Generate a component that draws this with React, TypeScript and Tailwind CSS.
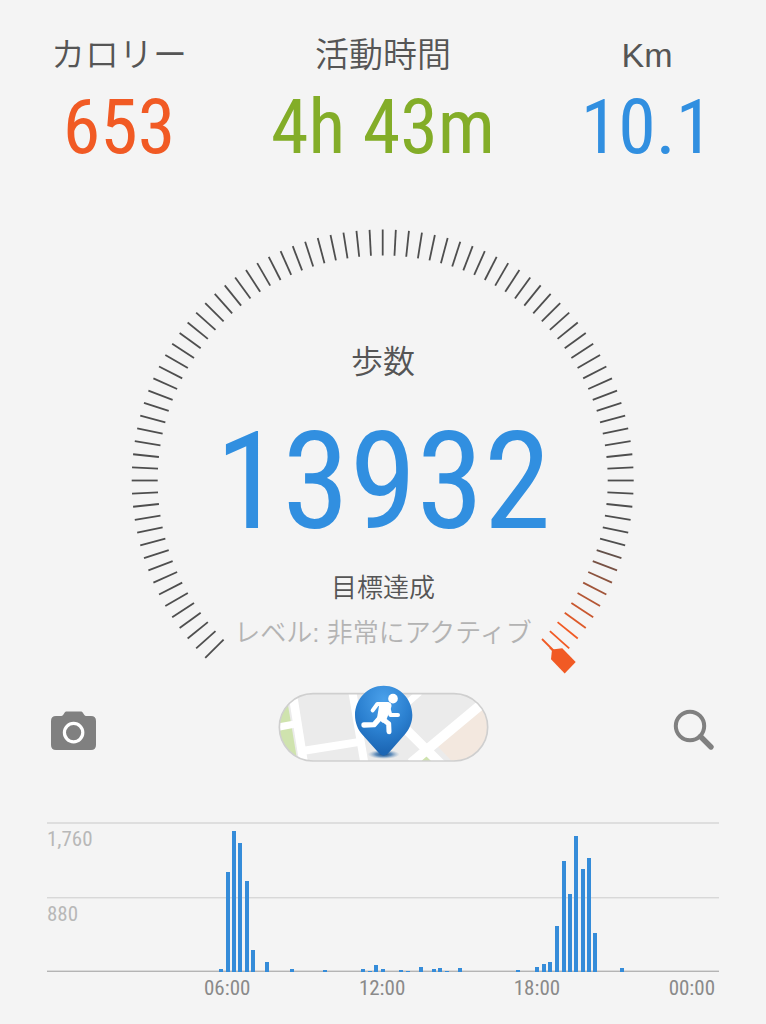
import { useId } from 'react';

const condensed =
  "font-['Roboto_Condensed','Liberation_Sans_Narrow','Arial_Narrow','Liberation_Sans',sans-serif] font-normal";

const stats = [
  { label: 'カロリー', value: '653', color: 'text-[#f15a24]' },
  { label: '活動時間', value: '4h 43m', color: 'text-[#83ad28]' },
  { label: 'Km', value: '10.1', color: 'text-[#318fe0]' },
];

// [x, height] of every quarter hour that has steps
const bars = [
  [174, 3], [181, 100], [187, 141], [193, 129], [200, 91], [206, 22],
  [220, 10], [245, 3], [278, 2], [316, 3], [323, 1], [329, 7], [336, 3],
  [354, 2], [361, 1], [374, 5], [387, 3], [393, 4], [400, 1], [413, 4],
  [471, 2], [490, 5], [497, 8], [503, 10], [510, 46], [517, 111],
  [523, 78], [529, 136], [536, 103], [542, 114], [548, 39], [575, 4],
];

const hours = ['06:00', '12:00', '18:00', '00:00'];

function tickColor(angle: number) {
  const t = Math.max(0, Math.min(1, (angle - 105) / 24));
  const mix = (a: number, b: number) => Math.round(a + (b - a) * t);
  return `rgb(${mix(78, 241)}, ${mix(78, 90)}, ${mix(78, 36)})`;
}

function GaugeRing() {
  const ticks = Array.from({ length: 91 }, (_, i) => i * 3 - 135);

  return (
    <svg
      viewBox="0 0 520 460"
      className="col-start-1 row-start-1 w-[520px] max-w-full"
      aria-hidden="true"
    >
      {ticks.map((angle) => (
        <line
          key={angle}
          x1="259.7"
          x2="259.7"
          y1="9.5"
          y2={angle === 135 ? '24' : '35.5'}
          stroke={tickColor(angle)}
          strokeWidth="1.8"
          transform={`rotate(${angle} 259.7 260.5)`}
        />
      ))}
      <path d="M419 419 L431 431" stroke="#f15a24" strokeWidth="1.8" />
      <path
        d="M429 429.5 L439.3 428.3 L452.7 442 L441.7 453.5 L428 439.3 Z"
        fill="#f15a24"
      />
    </svg>
  );
}

function CameraIcon() {
  return (
    <svg viewBox="0 0 46 40" className="w-[46px]" aria-hidden="true">
      <path
        d="M5 5 H9 C11 5 11.6 4.6 12.4 3.4 L13.4 2 C14 1 14.8 .6 16 .6 H29.4 C30.6 .6 31.4 1 32 2 L33 3.4 C33.8 4.6 34.4 5 36 5 H40 Q45 5 45 10 V34 Q45 39 40 39 H5 Q0 39 0 34 V10 Q0 5 5 5 Z"
        fill="#808080"
      />
      <circle cx="22.6" cy="21.6" r="9.2" fill="none" stroke="#fff" strokeWidth="3.2" />
    </svg>
  );
}

function SearchIcon() {
  return (
    <svg viewBox="0 0 46 46" className="w-[46px]" aria-hidden="true">
      <circle cx="21" cy="18" r="14.2" fill="none" stroke="#808080" strokeWidth="4" />
      <path d="M31.5 28.5 L42 39" stroke="#808080" strokeWidth="5.4" strokeLinecap="round" />
    </svg>
  );
}

function MapPin() {
  const id = useId();

  return (
    <svg viewBox="22 24 636 240" className="w-[212px]" aria-hidden="true">
      <defs>
        <clipPath id={`${id}-pill`}>
          <rect x="29" y="56" width="625" height="202" rx="101" />
        </clipPath>
        <radialGradient id={`${id}-pin`} cx="0.5" cy="0.2" r="0.75">
          <stop offset="0" stopColor="#4aa0ea" />
          <stop offset="0.6" stopColor="#2b80d0" />
          <stop offset="1" stopColor="#1c66b4" />
        </radialGradient>
        <radialGradient id={`${id}-shadow`}>
          <stop offset="0" stopColor="#0c3f78" />
          <stop offset="0.5" stopColor="#2a69a8" stopOpacity="0.7" />
          <stop offset="1" stopColor="#7fa0c0" stopOpacity="0" />
        </radialGradient>
      </defs>

      {/* Map */}
      <g clipPath={`url(#${id}-pill)`}>
        <rect x="24" y="50" width="640" height="214" fill="#ebebeb" />
        <path d="M24 60 H50 L84 264 H24 Z" fill="#cfe3ae" />
        <path d="M500 210 L625 100 L664 80 V264 H552 Z" fill="#f3e8df" />
        <path d="M452 262 L468 242 L488 262 Z" fill="#cfe3ae" />
        <g fill="none" stroke="#fff">
          <path d="M68 50 L102 264" strokeWidth="26" />
          <path d="M24 157 L76 147" strokeWidth="22" />
          <path d="M98 228 L275 200" strokeWidth="24" />
          <path d="M248 50 L284 264" strokeWidth="24" />
          <path d="M398 152 L535 288" strokeWidth="28" />
          <path d="M424 264 L640 84" strokeWidth="30" />
          <path d="M395 100 L450 52" strokeWidth="20" />
        </g>
      </g>
      <rect
        x="29"
        y="56"
        width="625"
        height="202"
        rx="101"
        fill="none"
        stroke="#cfcfcf"
        strokeWidth="5"
      />

      {/* Pin */}
      <ellipse cx="342" cy="238" rx="48" ry="14" fill={`url(#${id}-shadow)`} />
      <path
        d="M342 242 C334 242 328 234 320 226 L277 178 C264 162 256 143 256 120 C256 72 294 32 342 32 C390 32 428 72 428 120 C428 143 419 162 406 178 L364 226 C356 234 350 242 342 242 Z"
        fill={`url(#${id}-pin)`}
      />
      <circle cx="370" cy="71" r="14.5" fill="#fff" />
      <g fill="none" stroke="#fff" strokeLinecap="round" strokeLinejoin="round">
        <path d="M309 106 L323 87 H347" strokeWidth="12" />
        <path d="M356 98 L362 120 H385" strokeWidth="12" />
        <path d="M334 125 L313 149 L283 150" strokeWidth="16" />
        <path d="M336 130 L357 146 L358 170" strokeWidth="15" />
      </g>
      <path
        d="M330 81 H356 Q368 84 365 96 L350 134 L340 144 L322 130 Z"
        fill="#fff"
      />
    </svg>
  );
}

function StepsChart() {
  return (
    <section aria-label="歩数グラフ" className={`mt-[59px] px-[47px] ${condensed}`}>
      <div className="grid">
        <svg
          viewBox="0 0 672 150"
          className="col-start-1 row-start-1 w-full"
          aria-hidden="true"
        >
          <rect x="0" y="0" width="672" height="2" fill="#dedede" />
          <rect x="0" y="75" width="672" height="1.4" fill="#d8d8d8" />
          <rect x="0" y="148.6" width="672" height="2" fill="#b4b4b4" />
          {bars.map(([x, height]) => (
            <rect
              key={x}
              x={x - 2}
              y={150 - height}
              width="4"
              height={height}
              fill="#358cd9"
            />
          ))}
        </svg>
        <div className="col-start-1 row-start-1 grid grid-rows-2 text-[21px] leading-6 text-[#b8b8b8]">
          <span className="pt-[5px]">1,760</span>
          <span className="pt-[5px]">880</span>
        </div>
      </div>
      <div className="mt-1 flex justify-between pl-[157px] pr-1 text-[21px] leading-6 text-[#8a8a8a]">
        {hours.map((hour) => (
          <span key={hour}>{hour}</span>
        ))}
      </div>
    </section>
  );
}

export default function App() {
  return (
    <main className="min-h-screen bg-[#f4f4f4] pt-[35px] pb-6 font-['Liberation_Sans','Noto_Sans_CJK_JP',sans-serif] text-[#555555]">
      {/* Daily totals */}
      <dl className="flex justify-between px-[51px] text-center">
        {stats.map((stat) => (
          <div key={stat.label} className="min-w-[136px]">
            <dt className="text-[34px] leading-10 font-[350]">{stat.label}</dt>
            <dd className={`mt-3 text-[76px] leading-[80px] ${condensed} ${stat.color}`}>
              {stat.value}
            </dd>
          </div>
        ))}
      </dl>

      {/* Step gauge */}
      <section className="mt-[53px] grid justify-items-center">
        <GaugeRing />
        <div className="col-start-1 row-start-1 pt-[122px] text-center font-[350]">
          <h1 className="text-[32px] leading-10">歩数</h1>
          <p
            className={`mt-[30px] text-[136px] leading-[140px] text-[#318fe0] ${condensed}`}
          >
            13932
          </p>
          <p className="mt-[18px] text-[26px] leading-9">目標達成</p>
          <p className="mt-[9px] text-[26px] leading-9 text-[#b3b3b3]">
            レベル: 非常にアクティブ
          </p>
        </div>
      </section>

      {/* Actions */}
      <div className="mt-[3px] flex items-end justify-between px-[51px]">
        <button type="button" aria-label="カメラ" className="flex h-16 items-center">
          <CameraIcon />
        </button>
        <button type="button" aria-label="マップ">
          <MapPin />
        </button>
        <button type="button" aria-label="検索" className="flex h-16 items-center">
          <SearchIcon />
        </button>
      </div>

      <StepsChart />
    </main>
  );
}
